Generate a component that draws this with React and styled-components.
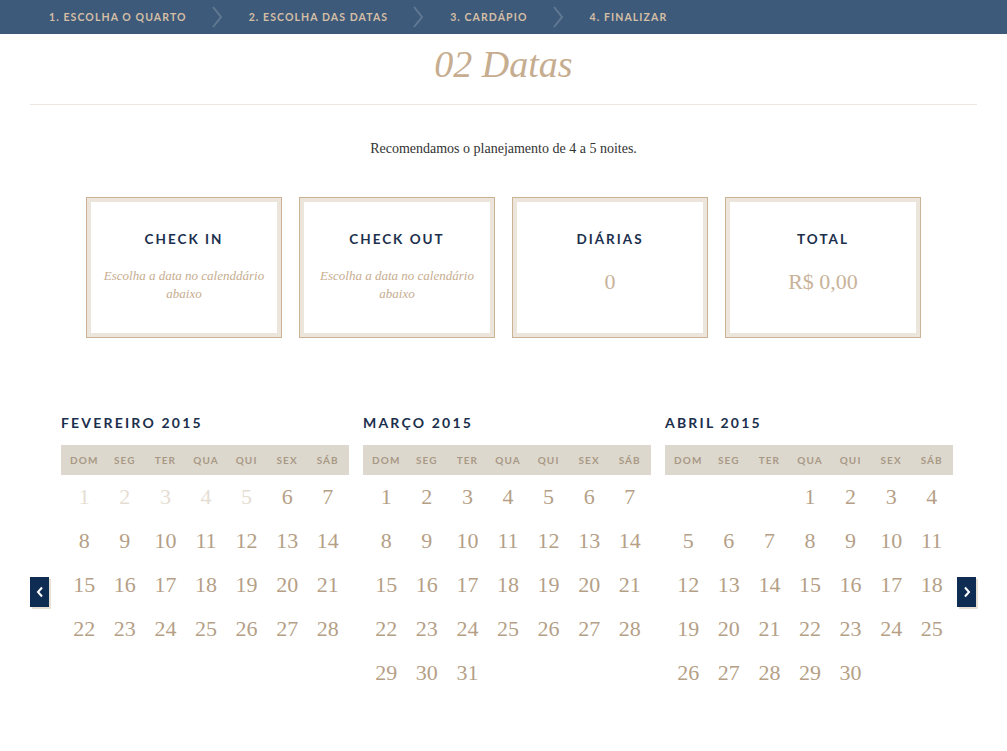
import React from 'react';
import styled, { createGlobalStyle } from 'styled-components';

const GlobalStyle = createGlobalStyle`
  body {
    margin: 0;
    background: #fff;
    font-family: 'Liberation Serif', serif;
  }
`;

const Page = styled.div`
  width: 1007px;
  min-height: 751px;
  background: #fff;
`;

const Steps = styled.nav`
  height: 34px;
  background: #3e5a7a;
  display: flex;
  align-items: center;
  padding-left: 49px;
`;

const Step = styled.span`
  font-family: 'Lato', sans-serif;
  font-weight: 700;
  font-size: 10.5px;
  letter-spacing: 1.1px;
  color: #d4bfa6;
  white-space: nowrap;
`;

const Chevron = styled.svg`
  margin: 0 26px 0 24px;
  display: block;
`;

const Main = styled.div`
  padding: 0 30px;
`;

const Title = styled.h1`
  margin: 0;
  height: 71px;
  padding-bottom: 10px;
  box-sizing: border-box;
  display: flex;
  align-items: center;
  justify-content: center;
  font-family: 'Liberation Serif', serif;
  font-style: italic;
  font-weight: 400;
  font-size: 38px;
  color: #c6ad8f;
  border-bottom: 1px solid #efe7de;
`;

const Lead = styled.p`
  margin: 36px 0 0;
  text-align: center;
  font-size: 14px;
  color: #333;
`;

const Cards = styled.div`
  display: flex;
  justify-content: center;
  gap: 17px;
  margin-top: 40px;
`;

const Card = styled.div`
  width: 186px;
  height: 131px;
  border: 1px solid #cbb295;
  outline: 4px solid #ece5dc;
  outline-offset: -5px;
  padding: 4px;
  display: flex;
  flex-direction: column;
  align-items: center;
  box-sizing: content-box;
`;

const CardTitle = styled.div`
  margin-top: 29px;
  font-family: 'Lato', sans-serif;
  font-weight: 700;
  font-size: 13.5px;
  letter-spacing: 2px;
  color: #1b2f4d;
`;

const CardHint = styled.div`
  margin-top: 20px;
  font-style: italic;
  font-size: 13px;
  line-height: 18px;
  color: #c6ad8f;
  text-align: center;
  padding: 0 12px;
`;

const CardValue = styled.div`
  margin-top: 22px;
  font-size: 22px;
  color: #c9b39a;
`;

const CalendarRow = styled.div`
  display: flex;
  align-items: flex-start;
  margin-top: 76px;
`;

const Arrow = styled.button`
  width: 19px;
  height: 30px;
  padding: 0;
  border: none;
  background: #0f2d52;
  box-shadow: 2px 2px 0 #e8e0d4;
  margin-top: 163px;
  margin-left: ${p => p.$ml || 0}px;
  display: flex;
  align-items: center;
  justify-content: center;
  cursor: pointer;
`;

const Months = styled.div`
  display: flex;
  gap: 14px;
  margin-left: 12px;
`;

const Month = styled.div`
  width: 288px;
`;

const MonthName = styled.div`
  height: 18px;
  font-family: 'Lato', sans-serif;
  font-weight: 700;
  font-size: 14px;
  letter-spacing: 2.2px;
  color: #1b2f4d;
  margin-bottom: 13px;
`;

const Grid = styled.div`
  display: grid;
  grid-template-columns: repeat(7, 1fr);
  padding: 0 1px 0 3px;
  background: ${p => p.$head ? '#ddd8cd' : 'transparent'};
`;

const WeekDay = styled.div`
  height: 30px;
  display: flex;
  align-items: center;
  justify-content: center;
  font-family: 'Lato', sans-serif;
  font-weight: 700;
  font-size: 10px;
  letter-spacing: 1.1px;
  color: #a89886;
`;

const Day = styled.div`
  height: 44px;
  display: flex;
  align-items: center;
  justify-content: center;
  font-size: 22px;
  color: ${p => (p.$disabled ? '#e6ded3' : '#b59f87')};
`;

const WEEK = ['DOM', 'SEG', 'TER', 'QUA', 'QUI', 'SEX', 'SÁB'];

const MONTHS = [
  { name: 'FEVEREIRO 2015', start: 0, days: 28, disabledUntil: 5 },
  { name: 'MARÇO 2015', start: 0, days: 31, disabledUntil: 0 },
  { name: 'ABRIL 2015', start: 3, days: 30, disabledUntil: 0 },
];

const STEPS = ['1. ESCOLHA O QUARTO', '2. ESCOLHA DAS DATAS', '3. CARDÁPIO', '4. FINALIZAR'];

const App = () => (
  <Page>
    <GlobalStyle />
    <Steps>
      {STEPS.map((s, i) => (
        <React.Fragment key={s}>
          <Step>{s}</Step>
          {i < STEPS.length - 1 && (
            <Chevron width="12" height="22" viewBox="0 0 12 22">
              <polyline points="2,1 10,11 2,21" fill="none" stroke="#607892" strokeWidth="2" />
            </Chevron>
          )}
        </React.Fragment>
      ))}
    </Steps>

    <Main>
      <Title>02 Datas</Title>
      <Lead>Recomendamos o planejamento de 4 a 5 noites.</Lead>

      <Cards>
        <Card>
          <CardTitle>CHECK IN</CardTitle>
          <CardHint>Escolha a data no calenddário abaixo</CardHint>
        </Card>
        <Card>
          <CardTitle>CHECK OUT</CardTitle>
          <CardHint>Escolha a data no calendário abaixo</CardHint>
        </Card>
        <Card>
          <CardTitle>DIÁRIAS</CardTitle>
          <CardValue>0</CardValue>
        </Card>
        <Card>
          <CardTitle>TOTAL</CardTitle>
          <CardValue>R$ 0,00</CardValue>
        </Card>
      </Cards>

      <CalendarRow>
        <Arrow aria-label="anterior">
          <svg width="8" height="12" viewBox="0 0 8 12">
            <polyline points="6,1.5 2,6 6,10.5" fill="none" stroke="#fff" strokeWidth="2" />
          </svg>
        </Arrow>
        <Months>
          {MONTHS.map(m => (
            <Month key={m.name}>
              <MonthName>{m.name}</MonthName>
              <Grid $head>
                {WEEK.map(w => <WeekDay key={w}>{w}</WeekDay>)}
              </Grid>
              <Grid>
                {Array.from({ length: m.start }).map((_, i) => <Day key={'e' + i} />)}
                {Array.from({ length: m.days }).map((_, i) => (
                  <Day key={i} $disabled={i + 1 <= m.disabledUntil}>{i + 1}</Day>
                ))}
              </Grid>
            </Month>
          ))}
        </Months>
        <Arrow aria-label="próximo" $ml={4}>
          <svg width="8" height="12" viewBox="0 0 8 12">
            <polyline points="2,1.5 6,6 2,10.5" fill="none" stroke="#fff" strokeWidth="2" />
          </svg>
        </Arrow>
      </CalendarRow>
    </Main>
  </Page>
);

export default App;
